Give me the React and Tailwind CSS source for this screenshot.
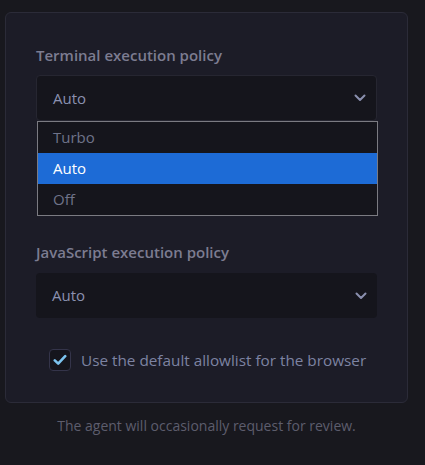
import React, { useState } from 'react';

const font = { fontFamily: '"Open Sans", "Noto Sans", sans-serif' };

const Chevron = () => (
  <svg width="12" height="8" viewBox="0 0 12 8" fill="none" className="text-[#8a8fae]">
    <path d="M1.5 1.5 6 6l4.5-4.5" stroke="currentColor" strokeWidth="2" strokeLinecap="round" strokeLinejoin="round" />
  </svg>
);

const PolicySelect = ({ value, bordered, tall }) => (
  <div
    className={`${tall ? 'h-[46px]' : 'h-[45px]'} w-[341px] rounded-[4px] bg-[#15151c] flex items-center justify-between pl-[16px] pr-[10px] ${
      bordered ? 'border border-[#262631]' : ''
    }`}
  >
    <span className="text-[15px] text-[#8b91b0]">{value}</span>
    <Chevron />
  </div>
);

const App = () => {
  const [terminal] = useState('Auto');
  const options = ['Turbo', 'Auto', 'Off'];

  return (
    <div className="w-[425px] h-[465px] bg-[#18181e] pt-[12px] pl-[5px] overflow-hidden" style={font}>
      <div className="w-[403px] h-[391px] rounded-[6px] border border-[#2b2b38] bg-[#1c1c27] pl-[30px] pt-[32px]">
        {/* terminal policy */}
        <p className="text-[15px] leading-[20px] font-semibold text-[#7c7c91] mb-[10px]">Terminal execution policy</p>
        <div className="relative">
          <PolicySelect value={terminal} bordered tall />
          <ul className="absolute left-[1px] top-[46px] w-[341px] border border-[#7b7b82] bg-[#15151c] z-10">
            {options.map(o => (
              <li
                key={o}
                className={`h-[31px] flex items-center pl-[15px] text-[15px] ${
                  o === terminal ? 'bg-[#1d6bd6] text-white' : 'text-[#6f7389]'
                }`}
              >
                {o}
              </li>
            ))}
          </ul>
        </div>

        {/* javascript policy */}
        <p className="mt-[121px] text-[15px] leading-[20px] font-semibold text-[#7c7c91] mb-[11px]">JavaScript execution policy</p>
        <PolicySelect value="Auto" />

        <label className="mt-[31px] ml-[13px] flex items-center gap-[10px]">
          <span className="w-[22px] h-[22px] rounded-[4px] bg-[#15151c] border border-[#34344a] flex items-center justify-center">
            <svg width="14" height="12" viewBox="0 0 14 12" fill="none">
              <path d="M1.8 6.4 5.2 9.6 12.2 2.2" stroke="#7cc4ef" strokeWidth="2.6" strokeLinecap="round" strokeLinejoin="round" />
            </svg>
          </span>
          <span className="text-[15.3px] text-[#7d83a2]">Use the default allowlist for the browser</span>
        </label>
      </div>

      <p className="w-[403px] text-center mt-[12px] text-[14px] text-[#5d5d6d]">The agent will occasionally request for review.</p>
    </div>
  );
};

export default App;
